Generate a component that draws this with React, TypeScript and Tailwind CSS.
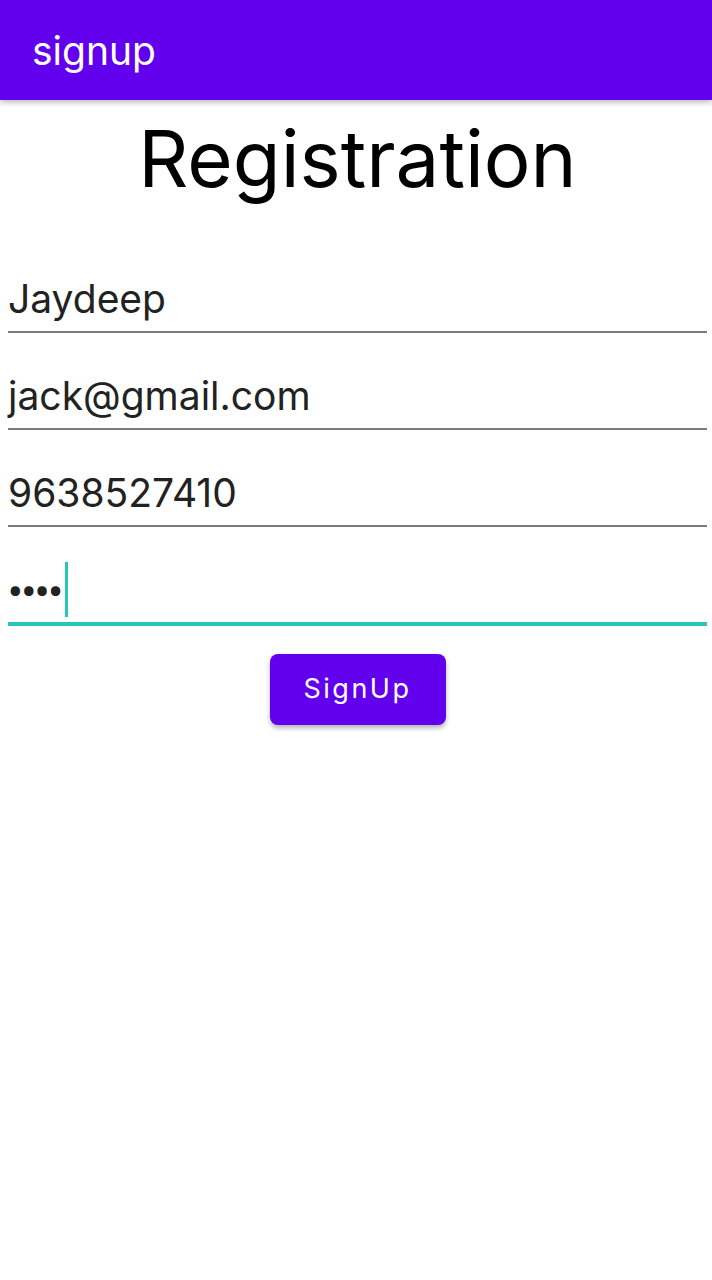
function Field({ value }: { value: string }) {
  return (
    <div className="flex h-[97px] items-end border-b-2 border-[#7b7b7b] pb-[13px]">
      <span className="text-[39px] leading-none text-[#222222]">{value}</span>
    </div>
  );
}

function App() {
  return (
    <section className="flex min-h-[1280px] w-full flex-col bg-white font-['Inter',sans-serif]">
      <header className="flex h-[100px] items-center bg-[#6200ee] px-8 shadow-[0_2px_6px_rgba(0,0,0,0.3)]">
        <h1 className="text-[39px] leading-none text-white">signup</h1>
      </header>
      <div className="flex flex-col pl-2 pr-[5px]">
        <h2 className="mt-[12px] text-center text-[78px] leading-[1.2] text-black">Registration</h2>
        <div className="mt-[30px] flex flex-col">
          <Field value="Jaydeep" />
          <Field value="jack@gmail.com" />
          <Field value="9638527410" />
          <div className="flex h-[99px] items-end border-b-4 border-[#26c6b8] pb-[5px]">
            <span className="mb-[4px] font-['Roboto',sans-serif] text-[40px] font-bold leading-none tracking-[-1px] text-[#222222]">••••</span>
            <span className="ml-[3px] h-[55px] w-[3px] bg-[#26c6b8]" />
          </div>
        </div>
        <div className="mt-[28px] flex justify-center">
          <button className="h-[71px] w-[176px] rounded-lg bg-[#6200ee] text-[27px] tracking-[2.5px] text-white shadow-[0_3px_5px_rgba(0,0,0,0.3)]">
            SignUp
          </button>
        </div>
      </div>
    </section>
  );
}

export default App;
